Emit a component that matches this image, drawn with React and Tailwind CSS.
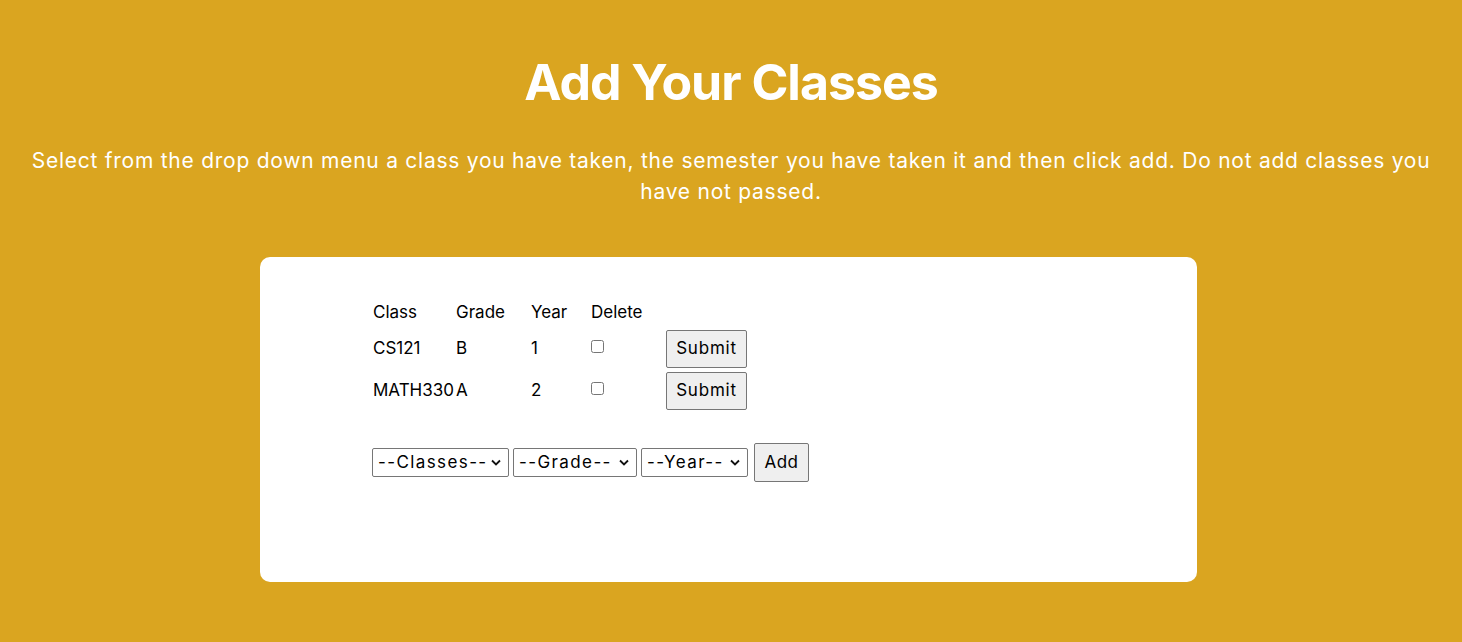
import React from "react";

const rows = [
  { name: "CS121", grade: "B", year: "1" },
  { name: "MATH330", grade: "A", year: "2" },
];

const Chevron = () => (
  <svg width="10" height="7" viewBox="0 0 10 7" className="shrink-0">
    <path d="M1 1.5 L5 5.5 L9 1.5" fill="none" stroke="#111" strokeWidth="1.8" />
  </svg>
);

// fake native select so the chevron looks the same everywhere
const Picker = ({ label, width }) => (
  <div
    className={`flex h-[29px] items-center justify-between rounded-[2px] border border-[#767676] bg-white pl-[5px] pr-[7px] ${width}`}
  >
    <span>{label}</span>
    <Chevron />
  </div>
);

const App = () => {
  return (
    <div
      className="min-h-screen bg-[#daa520] pt-[57px] pb-[60px]"
      style={{ fontFamily: "Inter, 'Noto Sans', sans-serif" }}
    >
      <h1 className="text-center text-[50px] leading-none font-bold tracking-[-1px] text-white">
        Add Your Classes
      </h1>

      <p className="mx-auto mt-[38px] max-w-[1420px] text-center text-[21px] leading-[31px] tracking-[0.75px] text-white">
        Select from the drop down menu a class you have taken, the semester you have taken it and then
        click add. Do not add classes you have not passed.
      </p>

      <div className="mt-[50px] ml-[260px] h-[325px] w-[937px] rounded-[10px] bg-white pl-[112px] pt-[42px] text-[17px] text-black">
        {/* classes table */}
        <div className="grid grid-cols-[83px_75px_60px_75px_auto] grid-rows-[28px_43px_41px] items-center pl-px">
          <div>Class</div>
          <div>Grade</div>
          <div>Year</div>
          <div>Delete</div>
          <div />
          {rows.map((r) => (
            <React.Fragment key={r.name}>
              <div>{r.name}</div>
              <div>{r.grade}</div>
              <div>{r.year}</div>
              <div className="mb-[5px] flex">
                <input type="checkbox" className="h-[13px] w-[13px]" />
              </div>
              <div>
                <button className="h-[38px] w-[81px] rounded-[2px] border border-[#767676] bg-[#efefef] text-[17px] tracking-[0.8px]">
                  Submit
                </button>
              </div>
            </React.Fragment>
          ))}
        </div>

        {/* add row */}
        <div className="mt-[32px] flex items-center gap-[4px] text-[17px] tracking-[1.4px]">
          <Picker label="--Classes--" width="w-[137px]" />
          <Picker label="--Grade--" width="w-[124px]" />
          <Picker label="--Year--" width="w-[107px]" />
          <button className="ml-[2px] h-[39px] w-[55px] rounded-[2px] border border-[#767676] bg-[#efefef] text-[17px] tracking-[0.5px]">
            Add
          </button>
        </div>
      </div>
    </div>
  );
};

export default App;
